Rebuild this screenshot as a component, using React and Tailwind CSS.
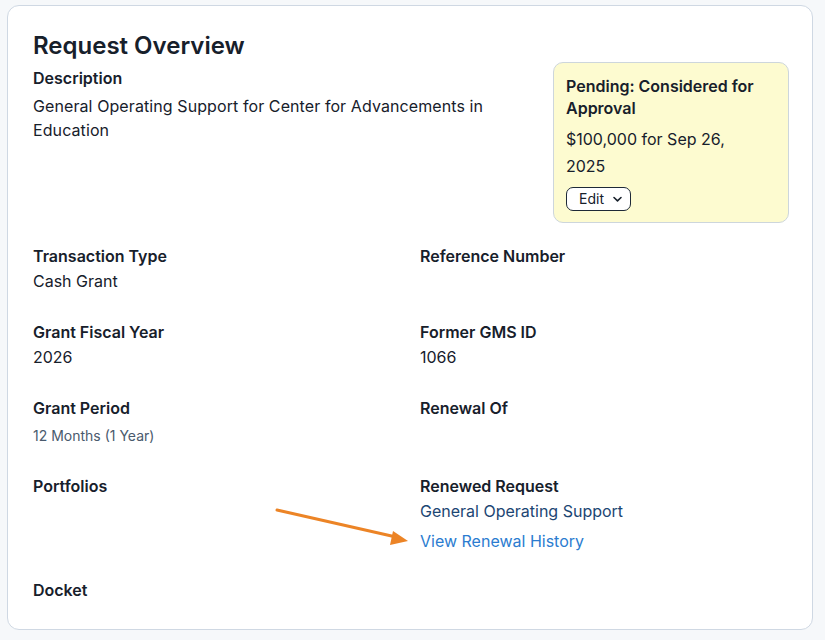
import React from "react";

function Field({ label, children }) {
  return (
    <div>
      <div className="text-base leading-6 font-semibold text-[#17202b]">{label}</div>
      {children}
    </div>
  );
}

export default function App() {
  return (
    <div className="min-h-[640px] w-[825px] bg-[#f6f8fa] pt-[5px] pl-[7px]" style={{ fontFamily: "Inter, 'Noto Sans', sans-serif" }}>
      <div className="relative w-[806px] h-[625px] bg-white border border-[#cfd8e3] rounded-xl pl-[25px] pr-[23px] pt-[24px]">
        <h1 className="text-2xl leading-8 font-semibold text-[#17202b]">Request Overview</h1>
        <div className="flex gap-5">
          <div className="flex-1 pt-1">
            <div className="text-base leading-6 font-semibold text-[#17202b]">Description</div>
            <div className="text-base leading-6 text-[#17202b] mt-1 tracking-[0.09px]">
              General Operating Support for Center for Advancements in Education
            </div>
          </div>
          <div className="w-[236px] h-[161px] shrink-0 bg-[#fdfbd0] border border-[#cdd6dc] rounded-[10px] px-[12px] pt-[12px]">
            <div className="max-w-[194px] text-base leading-[22px] font-semibold text-[#17202b]">
              Pending: Considered for Approval
            </div>
            <div className="max-w-[194px] text-base leading-[27px] text-[#17202b] mt-[7px]">
              $100,000 for Sep 26, 2025
            </div>
            <button className="mt-[7px] flex items-center gap-[8px] h-[24px] w-[65px] pl-[12px] border border-[#1e2937] rounded-[7px] bg-white text-sm text-[#17202b]">
              Edit
              <svg width="11" height="10" viewBox="0 0 11 10" fill="none" stroke="#17202b" strokeWidth="1.6" strokeLinecap="round" strokeLinejoin="round">
                <path d="M2 3.5 L5.5 6.8 L9 3.5" />
              </svg>
            </button>
          </div>
        </div>

        <div className="grid grid-cols-2 gap-x-[18px] mt-[21px]">
          <Field label="Transaction Type">
            <div className="text-base leading-6 text-[#17202b] mt-[1px]">Cash Grant</div>
          </Field>
          <Field label="Reference Number" />

          <div className="mt-[27px]">
            <Field label="Grant Fiscal Year">
              <div className="text-base leading-6 text-[#17202b] mt-[1px]">2026</div>
            </Field>
          </div>
          <div className="mt-[27px]">
            <Field label="Former GMS ID">
              <div className="text-base leading-6 text-[#17202b] mt-[1px]">1066</div>
            </Field>
          </div>

          <div className="mt-[27px]">
            <Field label="Grant Period">
              <div className="text-sm leading-6 text-[#4a5a6d] mt-[4px]">12 Months (1 Year)</div>
            </Field>
          </div>
          <div className="mt-[27px]">
            <Field label="Renewal Of" />
          </div>

          <div className="mt-[26px]">
            <Field label="Portfolios" />
          </div>
          <div className="mt-[26px]">
            <Field label="Renewed Request">
              <div className="text-base leading-6 text-[#1c4673] mt-[1px]">General Operating Support</div>
              <div className="text-base leading-6 text-[#2b7cd0] mt-[6px]">View Renewal History</div>
            </Field>
          </div>

          <div className="mt-[25px]">
            <Field label="Docket" />
          </div>
          <div />
        </div>

        <svg className="absolute left-[260px] top-[500px]" width="160" height="50" viewBox="0 0 160 50" fill="none">
          <line x1="9" y1="4" x2="128" y2="31" stroke="#ec8426" strokeWidth="3" strokeLinecap="round" />
          <polygon points="140,35 125,25 122,39" fill="#ec8426" />
        </svg>
      </div>
    </div>
  );
}
